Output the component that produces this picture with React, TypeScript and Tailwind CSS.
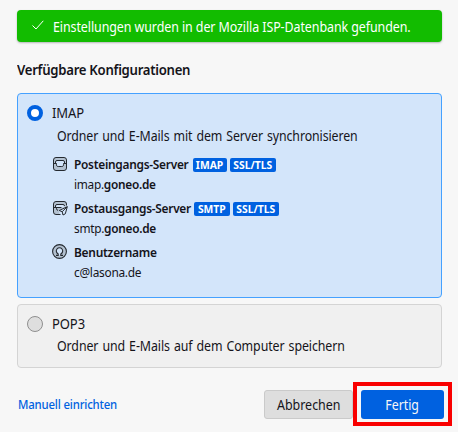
import React from "react";

type IconProps = { className?: string };

function InboxIcon({ className }: IconProps) {
  return (
    <svg viewBox="0 0 14 14" className={className} fill="none" stroke="#24292f" strokeLinejoin="round">
      <rect x="0.5" y="0.5" width="13" height="13" rx="2.5" fill="#b3c1d0" />
      <path d="M2.5 6V5A1.5 1.5 0 0 1 4 3.5h6A1.5 1.5 0 0 1 11.5 5v1" fill="#d3e5fa" />
      <path d="M1 6.5h2.5v1.2A1.8 1.8 0 0 0 5.3 9.5h3.4a1.8 1.8 0 0 0 1.8-1.8V6.5H13" />
      <path d="M4 6h6v1.7A1.3 1.3 0 0 1 8.7 9H5.3A1.3 1.3 0 0 1 4 7.7Z" fill="#d3e5fa" stroke="none" />
    </svg>
  );
}

function OutboxIcon({ className }: IconProps) {
  return (
    <svg viewBox="0 0 15 15" className={className} fill="none" stroke="#24292f" strokeLinejoin="round">
      <path d="M6.5 13.5H3A2.5 2.5 0 0 1 .5 11V3A2.5 2.5 0 0 1 3 .5h8A2.5 2.5 0 0 1 13.5 3v3L6 9Z" fill="#b3c1d0" stroke="none" />
      <path d="M7.5 13.5H3A2.5 2.5 0 0 1 .5 11V3A2.5 2.5 0 0 1 3 .5h8A2.5 2.5 0 0 1 13.5 3v1.5" />
      <path d="M2.5 6V5A1.5 1.5 0 0 1 4 3.5h6A1.5 1.5 0 0 1 11.5 5v.5L8.5 7H3Z" fill="#d3e5fa" stroke="none" />
      <path d="M2.5 6V5A1.5 1.5 0 0 1 4 3.5h6A1.5 1.5 0 0 1 11.5 5M1 6.5h7.5M3.5 6.7v1A1.8 1.8 0 0 0 5 9.4" />
      <path d="M14.3 5.7 6.2 9.5l3 1.2.8 3.3 2.3-1.2Z" fill="#d3e5fa" />
      <path d="M14.3 5.7 9.2 10.7" />
    </svg>
  );
}

function UserIcon({ className }: IconProps) {
  return (
    <svg viewBox="0 0 15 15" className={className} fill="none" stroke="#24292f" strokeWidth="1.1">
      <circle cx="7.5" cy="7.5" r="6.9" fill="#b3c1d0" />
      <path d="M4 11.4h2.2V9.9A3.2 3.2 0 1 1 8.8 9.9v1.5H11" fill="#d3e5fa" />
    </svg>
  );
}

function Badge({ className, children }: { className: string; children: string }) {
  return (
    <span className={`mt-0.5 flex h-3.5 items-center justify-center rounded-[2px] bg-[#0061e0] text-[11px] leading-none font-bold text-white ${className}`}>
      <span className="-mt-px scale-x-[0.94]">{children}</span>
    </span>
  );
}

export default function App() {
  return (
    <main className="h-[432px] w-[458px] overflow-hidden bg-[#f7f7f7] pt-2.5 pl-[17px] font-['Noto_Sans',sans-serif] text-sm text-[#15141a] whitespace-nowrap">
      <div className="flex h-8 w-[425px] items-center rounded bg-[#12bc00] pl-[15px] text-white shadow-[0_1px_2px_rgba(58,57,68,0.35)]">
        <svg viewBox="0 0 12 10" className="mb-0.5 h-2.5 w-3 shrink-0" fill="none" stroke="currentColor">
          <path d="M.5 5.5 4 9 11.3.8" />
        </svg>
        <span className="mt-px ml-[9px] origin-left scale-x-[0.89] tracking-[-0.1px]">Einstellungen wurden in der Mozilla ISP-Datenbank gefunden.</span>
      </div>

      <h2 className="mt-[18px] h-[33px] origin-left scale-x-[0.94] leading-5 font-semibold tracking-[-0.3px]">Verfügbare Konfigurationen</h2>

      <section className="h-[205px] w-[425px] rounded border border-[#45a1ff] bg-[#d3e5fa] pt-[9px] pl-[9px]">
        <div className="flex h-5 items-center">
          <span className="size-4 rounded-full border-4 border-[#0061e0] bg-white" />
          <span className="ml-[9px] origin-left scale-x-[0.93] tracking-[-0.1px]">IMAP</span>
        </div>
        <p className="mt-[3px] ml-[30px] origin-left scale-x-[0.882] leading-5 tracking-[-0.1px] [word-spacing:1px]">Ordner und E-Mails mit dem Server synchronisieren</p>

        <div className="mt-2 ml-[25px] flex flex-col gap-1 text-[13px] leading-5">
          <div className="flex h-10">
            <InboxIcon className="mt-[3px] ml-px size-3.5" />
            <div className="ml-1.5">
              <div className="flex h-5 items-center">
                <span className="ml-px w-[119px] origin-left scale-x-[0.915] font-semibold tracking-[-0.3px]">Posteingangs-Server</span>
                <Badge className="w-[34px]">IMAP</Badge>
                <Badge className="ml-[3px] w-[46px]">SSL/TLS</Badge>
              </div>
              <div className="ml-px origin-left scale-x-[0.91] tracking-[-0.3px]">imap.<span className="font-semibold">goneo.de</span></div>
            </div>
          </div>
          <div className="flex h-10">
            <OutboxIcon className="mt-[3px] ml-px size-[15px]" />
            <div className="ml-[5px]">
              <div className="flex h-5 items-center">
                <span className="ml-px w-[120px] origin-left scale-x-[0.915] font-semibold tracking-[-0.3px]">Postausgangs-Server</span>
                <Badge className="w-9">SMTP</Badge>
                <Badge className="ml-[3px] w-[46px]">SSL/TLS</Badge>
              </div>
              <div className="ml-px origin-left scale-x-[0.91] tracking-[-0.3px]">smtp.<span className="font-semibold">goneo.de</span></div>
            </div>
          </div>
          <div className="flex h-10">
            <UserIcon className="mt-0.5 size-[15px]" />
            <div className="ml-[7px]">
              <div className="origin-left scale-x-[0.92] font-semibold tracking-[-0.3px]">Benutzername</div>
              <div className="origin-left scale-x-[0.915] tracking-[-0.3px]">c@lasona.de</div>
            </div>
          </div>
        </div>
      </section>

      <section className="mt-1.5 h-16 w-[425px] rounded border border-[#d4d4d4] bg-[#f0f0f0] pt-[9px] pl-[9px]">
        <div className="flex h-5 items-center">
          <span className="size-4 rounded-full border border-[#8f8f8f] bg-[#dedede]" />
          <span className="ml-[9px] origin-left scale-x-[0.93] tracking-[-0.1px]">POP3</span>
        </div>
        <p className="mt-[2px] ml-[30px] origin-left scale-x-[0.885] leading-5 tracking-[-0.1px] [word-spacing:1px]">Ordner und E-Mails auf dem Computer speichern</p>
      </section>

      <footer className="mt-3.5 flex h-11 items-center">
        <a className="ml-px w-[246px] origin-left scale-x-[0.875] text-[13px] font-medium tracking-[-0.2px] text-[#0061e0]">Manuell einrichten</a>
        <button className="h-[29px] w-[89px] rounded-[3px] border border-[#cacaca] bg-[#dedede] pt-0.5">
          <span className="inline-block scale-x-[0.89]">Abbrechen</span>
        </button>
        <div className="h-11 w-[99px] border-4 border-[#f90000] p-1">
          <button className="block h-[29px] w-[83px] rounded-[3px] bg-[#0061e0] pt-px text-[#f7f7f7]">
            <span className="inline-block scale-x-[0.88]">Fertig</span>
          </button>
        </div>
      </footer>
    </main>
  );
}
